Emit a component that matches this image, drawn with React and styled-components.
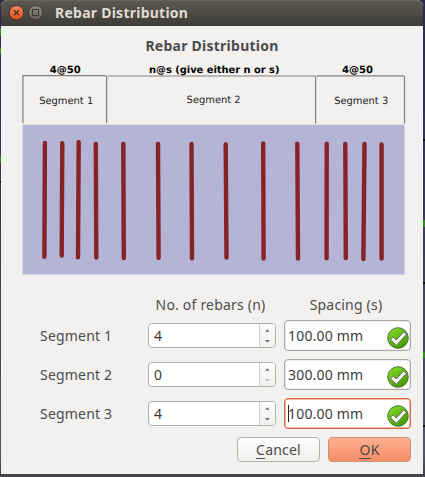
import React from "react";
import styled, { createGlobalStyle } from "styled-components";

const GlobalStyle = createGlobalStyle`
  * { box-sizing: border-box; }
  body { margin: 0; overflow: hidden; background: #3b3a56; }
`;

const Desktop = styled.main`
  position: relative;
  width: 425px;
  height: 477px;
  background: linear-gradient(#2c2850 0, #34345a 30%, #44445c 70%, #54546a 95%, #44444e 99%);
  font-family: "Noto Sans", "Open Sans", sans-serif;
  font-size: 14px;
  letter-spacing: 0.2px;
  color: #4c4c4c;
`;

const Backdrop = styled.svg`
  position: absolute;
  inset: 0;
`;

const Window = styled.section`
  position: relative;
  width: 422px;
  height: 474px;
  margin-left: 1px;
  display: flex;
  flex-direction: column;
  background: #f2f1ef;
  border-radius: 6px 6px 0 0;
  overflow: hidden;
`;

const TitleBar = styled.header`
  display: flex;
  align-items: center;
  height: 26px;
  flex: none;
  padding: 0 0 1px 7px;
  background: linear-gradient(#5b584f, #3d3c37);
  border-top: 1px solid #67645b;
`;

const WindowControls = styled.svg`
  width: 38px;
  height: 18px;
  flex: none;
`;

const WindowTitle = styled.h1`
  margin: -2px 0 0 9px;
  font-size: 14px;
  font-weight: 700;
  letter-spacing: 0.25px;
  color: #dfdbd2;
`;

const Heading = styled.h2`
  margin: 10px 0 0;
  height: 20px;
  line-height: 20px;
  text-align: center;
  font-size: 14px;
  font-weight: 700;
  letter-spacing: 0.25px;
`;

const Diagram = styled.svg`
  display: block;
  flex: none;
  width: 384px;
  height: 216px;
  margin: 4px 0 0 21px;
  font-family: "DejaVu Sans", sans-serif;
  font-size: 10px;
  letter-spacing: 0;
`;

const Form = styled.form`
  display: grid;
  grid-template-columns: 100px 128px 127px;
  grid-template-rows: 20px repeat(3, 31px);
  column-gap: 8px;
  row-gap: 8px;
  align-items: center;
  margin: 16px 0 0 39px;
`;

const ColumnHeader = styled.span`
  grid-column: ${(p) => p.$column};
  text-align: center;
  line-height: 20px;
  margin: -1px 3px -6px 0;
  white-space: nowrap;
`;

const RowLabel = styled.label`
  line-height: 20px;
  white-space: nowrap;
`;

const SpinBox = styled.div`
  display: flex;
  height: 25px;
  border: 1px solid #b2afa9;
  border-radius: 4px;
  background: #fff;
  overflow: hidden;
  color: #3c3c3c;
`;

const SpinValue = styled.span`
  flex: 1;
  padding-left: 5px;
  line-height: 24px;
`;

const SpinArrows = styled.svg`
  width: 16px;
  height: 23px;
  background: linear-gradient(#fdfdfd, #f0efed);
  border-left: 1px solid #d3d0cc;
`;

const LineEdit = styled.div`
  display: flex;
  align-items: center;
  justify-content: space-between;
  height: 31px;
  padding: 0 0 0 3px;
  border: 1px solid ${(p) => (p.$focused ? "#d9643c" : "#aaa7a1")};
  border-radius: 4px;
  background: #fff;
  box-shadow: inset 0 0 0 ${(p) => (p.$focused ? "0.5px #e07a55" : "0.3px #bbb")};
  color: #3c3c3c;
`;

const EditText = styled.span`
  position: relative;
  line-height: 20px;
  white-space: nowrap;
`;

const Caret = styled.i`
  position: absolute;
  left: 0;
  top: 1px;
  width: 1px;
  height: 17px;
  background: #222;
`;

const ValidIcon = styled.svg`
  width: 24px;
  height: 24px;
  margin-top: 4px;
`;

const Actions = styled.footer`
  display: flex;
  justify-content: flex-end;
  gap: 8px;
  margin: 8px 12px 0 0;
`;

const Button = styled.button`
  width: 83px;
  height: 25px;
  padding: 0;
  font: inherit;
  letter-spacing: inherit;
  line-height: 22px;
  color: #4c4c4c;
  border: 1px solid ${(p) => (p.$primary ? "#c9937b" : "#b5b2ac")};
  border-radius: 4px;
  background: ${(p) =>
    p.$primary ? "linear-gradient(#ffaf90, #f58d66)" : "linear-gradient(#fefefe, #efeeec)"};
`;

const Mnemonic = styled.span`
  display: inline-block;
  height: 20px;
  line-height: 22px;
  vertical-align: top;
  border-bottom: 1px solid #4c4c4c;
`;

const bars = [
  [44.9, 143, 44.4, 256.8],
  [62.3, 143.2, 61.7, 255.5],
  [78.7, 142.3, 78, 257.2],
  [95.8, 144, 96.3, 257.5],
  [123.3, 144, 123.8, 258],
  [158, 144, 158.6, 257.7],
  [191.5, 144, 192, 258.2],
  [225.7, 144.4, 226.5, 257.5],
  [263.2, 143.5, 263.6, 258.5],
  [297.3, 143.6, 298, 258.5],
  [326.7, 143.6, 326.6, 258.3],
  [345.3, 144, 345.8, 258],
  [364.5, 144, 363.4, 259],
  [381.6, 144.5, 381.6, 258.5],
];

const captions = [
  { x: 49.7, y: 73, width: 31, bold: true, text: "4@50" },
  { x: 149, y: 73, width: 130.5, bold: true, text: "n@s (give either n or s)" },
  { x: 342, y: 73, width: 31, bold: true, text: "4@50" },
  { x: 39.2, y: 103.7, width: 54, text: "Segment 1" },
  { x: 186.6, y: 102.5, width: 54, text: "Segment 2" },
  { x: 334.2, y: 103.5, width: 54, text: "Segment 3" },
];

function RebarDiagram() {
  return (
    <Diagram viewBox="22 60 384 216">
      <g stroke="#80807e" strokeWidth="1.2" fill="none">
        <path d="M22.9 123V75.6H106M107.5 76H315M316.5 75.8H404" />
        <path d="M106.6 76V123M315.6 76V123.5M404.5 76V123.5" />
      </g>
      {captions.map((c) => (
        <text
          key={c.x}
          x={c.x}
          y={c.y}
          textLength={c.width}
          lengthAdjust="spacingAndGlyphs"
          fontWeight={c.bold ? 700 : 400}
          fill={c.bold ? "#000" : "#1d1d1d"}
          textRendering="geometricPrecision"
        >
          {c.text}
        </text>
      ))}
      <rect x="22.7" y="124.7" width="381.8" height="149.8" fill="#b4b4d7" />
      <g stroke="#882325" strokeWidth="4.4" strokeLinecap="round">
        {bars.map(([x1, y1, x2, y2]) => (
          <line key={x1} x1={x1} y1={y1} x2={x2} y2={y2} />
        ))}
      </g>
    </Diagram>
  );
}

function CheckBadge() {
  return (
    <ValidIcon viewBox="0 0 24 24">
      <defs>
        <linearGradient id="green" x1="0" y1="0" x2="0.7" y2="1">
          <stop offset="0" stopColor="#8be02c" />
          <stop offset="1" stopColor="#439600" />
        </linearGradient>
      </defs>
      <circle cx="12" cy="12" r="10.3" fill="url(#green)" stroke="#46783f" strokeWidth="1" />
      <path
        d="M4.4 13.6l2.7-2.9 3.2 3.3 7.4-8.2 2.7 2.6-10 11z"
        fill="#f4f4f2"
        stroke="#5f6d57"
        strokeWidth="1"
        strokeLinejoin="round"
      />
    </ValidIcon>
  );
}

const rows = [
  { name: "Segment 1", count: 4, spacing: "100.00 mm" },
  { name: "Segment 2", count: 0, spacing: "300.00 mm" },
  { name: "Segment 3", count: 4, spacing: "100.00 mm", focused: true },
];

export default function App() {
  return (
    <Desktop>
      <GlobalStyle />
      <Backdrop width="425" height="477">
        <path d="M0 28h1v8h-1zM0 48h1v6h-1zM0 156h1v7h-1zM423 220h2v7h-2zM423 352h2v6h-2z" fill="#348c18" />
        <path d="M0 181h1v2h-1zM423 139h2v2h-2zM423 282h2v2h-2zM423 425h2v2h-2z" fill="#0c0c10" />
      </Backdrop>
      <Window>
        <TitleBar>
          <WindowControls viewBox="8 4 38 18">
            <defs>
              <linearGradient id="close" x1="0" y1="0" x2="0" y2="1">
                <stop stopColor="#f58762" />
                <stop offset="1" stopColor="#e34b18" />
              </linearGradient>
              <linearGradient id="max" x1="0" y1="0" x2="0" y2="1">
                <stop stopColor="#8a877f" />
                <stop offset="1" stopColor="#625f58" />
              </linearGradient>
            </defs>
            <circle cx="16.5" cy="12.7" r="7.3" fill="url(#close)" stroke="#35332e" />
            <path d="M14 10.2l5 5m0-5l-5 5" stroke="#40342c" strokeWidth="1.4" />
            <circle cx="35.6" cy="12.7" r="7.3" fill="url(#max)" stroke="#35332e" />
            <rect x="32.5" y="9.5" width="6" height="6" fill="none" stroke="#3b3a35" />
          </WindowControls>
          <WindowTitle>Rebar Distribution</WindowTitle>
        </TitleBar>
        <Heading>Rebar Distribution</Heading>
        <RebarDiagram />
        <Form>
          <ColumnHeader $column={2}>No. of rebars (n)</ColumnHeader>
          <ColumnHeader $column={3}>Spacing (s)</ColumnHeader>
          {rows.map((r) => (
            <React.Fragment key={r.name}>
              <RowLabel>{r.name}</RowLabel>
              <SpinBox>
                <SpinValue>{r.count}</SpinValue>
                <SpinArrows viewBox="0 0 16 23">
                  <path d="M5.5 7.5l2.3-2.7 2.3 2.7z" fill="#666" />
                  <path d="M5.2 16.2l2.6 2.8 2.6-2.8z" fill={r.count ? "#666" : "#c2c0bd"} />
                </SpinArrows>
              </SpinBox>
              <LineEdit $focused={r.focused}>
                <EditText>
                  {r.focused && <Caret />}
                  {r.spacing}
                </EditText>
                <CheckBadge />
              </LineEdit>
            </React.Fragment>
          ))}
        </Form>
        <Actions>
          <Button type="button"><Mnemonic>C</Mnemonic>ancel</Button>
          <Button type="button" $primary><Mnemonic>O</Mnemonic>K</Button>
        </Actions>
      </Window>
    </Desktop>
  );
}
